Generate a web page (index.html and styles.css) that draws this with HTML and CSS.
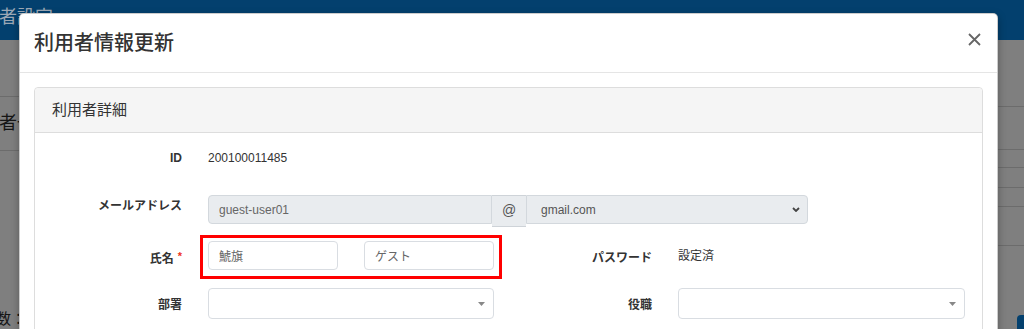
FILE: index.html
```html
<!DOCTYPE html>
<html lang="ja">

<head>
    <meta charset="UTF-8">
    <meta name="viewport" content="width=device-width, initial-scale=1.0">
    <title>利用者情報更新</title>
    <link rel="stylesheet" href="styles.css">
</head>

<body>
    <!-- 背景のページ (モーダルの後ろ) -->
    <div class="page">
        <header class="page-header"><span class="page-title">利用者設定</span></header>
        <div class="page-main">
            <div class="page-left">
                <div class="list-title">利用者一覧</div>
                <div class="list-count">件数：</div>
            </div>
            <div class="page-right">
                <div class="bg-row bg-row-head"></div>
                <div class="bg-row bg-row-a"></div>
                <div class="bg-row bg-row-b"></div>
                <div class="bg-row bg-row-c"></div>
                <div class="bg-row bg-row-d"></div>
                <div class="bg-button-wrap"><span class="bg-button"></span></div>
            </div>
        </div>
    </div>

    <!-- モーダル -->
    <div class="modal">
        <div class="modal-header">
            <h4 class="modal-title">利用者情報更新</h4>
            <button class="close" type="button">
                <svg width="13" height="13" viewBox="0 0 13 13">
                    <path d="M1 1L12 12M12 1L1 12" stroke="#666" stroke-width="1.8" fill="none" />
                </svg>
            </button>
        </div>

        <div class="modal-body">
            <div class="card">
                <div class="card-header">利用者詳細</div>
                <div class="card-body">
                    <div class="form-row row-id">
                        <div class="label">ID</div>
                        <div class="value">200100011485</div>
                    </div>

                    <div class="form-row row-mail">
                        <div class="label">メールアドレス</div>
                        <div class="mail-group">
                            <input class="field field-disabled mail-local" type="text" value="guest-user01" disabled>
                            <span class="addon">@</span>
                            <div class="field field-disabled mail-domain">
                                <span>gmail.com</span>
                                <svg width="8" height="5" viewBox="0 0 8 5">
                                    <path d="M1 1L4 4L7 1" stroke="#444" stroke-width="1.8" fill="none" />
                                </svg>
                            </div>
                        </div>
                    </div>

                    <div class="form-row row-name">
                        <div class="label">氏名<span class="required">*</span></div>
                        <div class="name-fields">
                            <span class="highlight"></span>
                            <input class="field" type="text" value="鯱旗">
                            <input class="field" type="text" value="ゲスト">
                        </div>
                        <div class="label">パスワード</div>
                        <div class="value">設定済</div>
                    </div>

                    <div class="form-row row-dept">
                        <div class="label">部署</div>
                        <div class="field select2">
                            <span></span>
                            <svg width="7" height="4" viewBox="0 0 7 4">
                                <path d="M0 0H7L3.5 4Z" fill="#888" />
                            </svg>
                        </div>
                        <div class="label">役職</div>
                        <div class="field select2">
                            <span></span>
                            <svg width="7" height="4" viewBox="0 0 7 4">
                                <path d="M0 0H7L3.5 4Z" fill="#888" />
                            </svg>
                        </div>
                    </div>
                </div>
            </div>
        </div>
    </div>
</body>

</html>
```

FILE: styles.css
```css
* {
    box-sizing: border-box;
}

body {
    margin: 0;
    height: 329px;
    overflow: hidden;
    position: relative;
    font-family: "Liberation Sans", "Noto Sans CJK JP", sans-serif;
    color: #333;
    background: #7f7f7f;
}

/* 背景ページ */
.page-header {
    height: 40px;
    background: #03406e;
    color: #9ca8b5;
    font-size: 18px;
    line-height: 34px;
    white-space: nowrap;
    overflow: hidden;
}

.page-title {
    display: inline-block;
    margin-left: -37px;
}

.page-main {
    display: flex;
    justify-content: space-between;
}

.page-left {
    width: 300px;
    white-space: nowrap;
    color: #151515;
}

.list-title {
    margin-top: 56px;
    margin-left: -37px;
    height: 55px;
    border-top: 1px solid #6c6c6c;
    border-bottom: 1px solid #6c6c6c;
    font-size: 18px;
    line-height: 52px;
}

.list-count {
    margin-top: 158px;
    margin-left: -19px;
    font-size: 15px;
    line-height: 20px;
}

.page-right {
    width: 300px;
    margin-top: 66px;
}

.bg-row {
    border-top: 1px solid #6c6c6c;
}

.bg-row-head {
    height: 43px;
}

.bg-row-a {
    height: 18px;
}

.bg-row-b {
    height: 20px;
}

.bg-row-c {
    height: 19px;
}

.bg-row-d {
    height: 40px;
    border-bottom: 1px solid #6c6c6c;
}

.bg-button-wrap {
    display: flex;
    justify-content: flex-end;
    margin-top: 69px;
}

.bg-button {
    width: 7px;
    height: 14px;
    background: #03406e;
    border-top-left-radius: 4px;
}

/* モーダル */
.modal {
    position: absolute;
    left: 19px;
    top: 13px;
    width: 979px;
    height: 340px;
    background: #fff;
    border: 1px solid rgba(0, 0, 0, 0.2);
    border-radius: 5px;
    box-shadow: 0 3px 9px rgba(0, 0, 0, 0.3);
}

.modal-header {
    display: flex;
    justify-content: space-between;
    align-items: center;
    padding: 14px 16px 14px 14px;
    border-bottom: 1px solid #e5e5e5;
}

.modal-title {
    margin: 0;
    font-size: 20px;
    font-weight: 500;
    line-height: 30px;
    color: #333;
}

.close {
    display: flex;
    padding: 0;
    margin-top: -8px;
    border: none;
    background: none;
}

.modal-body {
    padding: 14px;
}

.card {
    border: 1px solid #ddd;
    border-radius: 4px;
    height: 260px;
}

.card-header {
    padding: 11px 17px;
    font-size: 15px;
    line-height: 22px;
    background: #f5f5f5;
    border-bottom: 1px solid #ddd;
    border-radius: 4px 4px 0 0;
}

.card-body {
    padding-top: 15px;
}

.form-row {
    display: grid;
    grid-template-columns: 173px 286px 184px 287px;
    align-items: center;
    font-size: 12px;
}

.label {
    padding-right: 26px;
    text-align: right;
    font-weight: bold;
    line-height: 20px;
    color: #333;
}

.value {
    line-height: 20px;
    color: #333;
}

.row-mail {
    margin-top: 27px;
    align-items: start;
}

.row-mail .label {
    padding-top: 1px;
}

.row-name {
    margin-top: 14px;
}

.row-name .label {
    padding-top: 4px;
}

.row-dept {
    margin-top: 18px;
}

.row-dept .label {
    padding-top: 3px;
}

.required {
    margin-left: 4px;
    color: #e32;
    font-size: 11px;
    vertical-align: 3px;
}

.field {
    height: 29px;
    padding: 0 10px;
    border: 1px solid #d9dde2;
    border-radius: 4px;
    background: #fff;
    font: inherit;
    font-size: 12px;
    color: #666;
}

.field-disabled {
    background: #e9ecef;
    border-color: #d3d8dd;
}

.mail-group {
    grid-column: 2 / 5;
    display: flex;
    align-items: flex-start;
    width: 600px;
}

.mail-local {
    width: 284px;
    border-radius: 4px 0 0 4px;
}

.addon {
    width: 34px;
    height: 32px;
    display: flex;
    align-items: center;
    justify-content: center;
    background: #e9ecef;
    border: 1px solid #ced3d8;
    border-left: none;
    border-right: none;
    font-size: 14px;
    color: #555;
    padding-bottom: 2px;
}

.mail-domain {
    width: 282px;
    display: flex;
    align-items: center;
    justify-content: space-between;
    padding: 0 7px 0 14px;
    border-radius: 0 4px 4px 0;
    color: #555;
}

.name-fields {
    position: relative;
    display: flex;
    gap: 26px;
}

.name-fields .field {
    width: 130px;
}

/* 赤枠の注記 */
.highlight {
    position: absolute;
    left: -8px;
    right: -8px;
    top: -6px;
    bottom: -9px;
    border: 3px solid #f00;
}

.select2 {
    height: 31px;
    display: flex;
    align-items: center;
    justify-content: space-between;
    padding-right: 8px;
}
```
